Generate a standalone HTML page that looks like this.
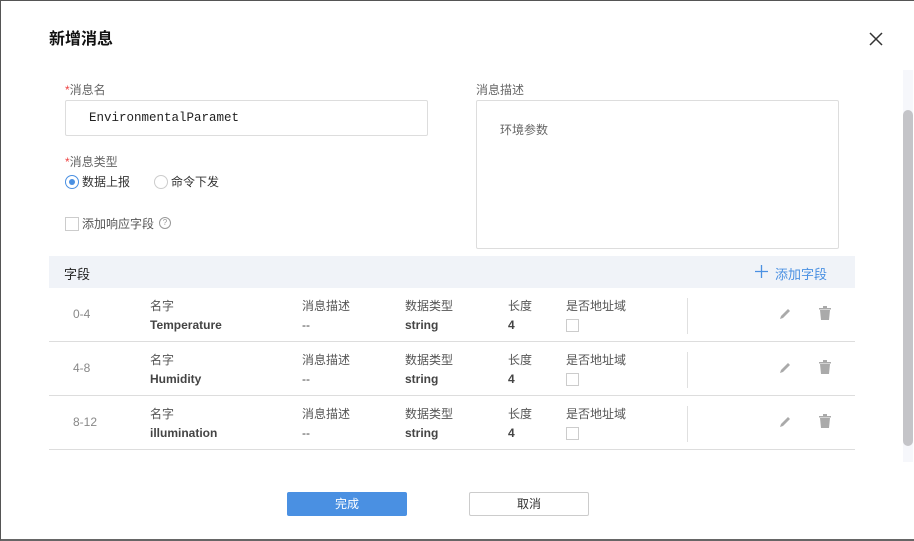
<!DOCTYPE html><html><head><meta charset="utf-8"><style>
*{margin:0;padding:0;box-sizing:border-box}
body{width:914px;height:541px;background:#fff;position:relative;overflow:hidden;font-family:"Liberation Sans","Noto Sans CJK SC",sans-serif;font-size:12px;color:#333}
.a{position:absolute;white-space:nowrap}
.lbl{color:#666;font-size:12px}
.red{color:#e44}
.row{position:absolute;left:49px;width:806px;height:54px;border-bottom:1px solid #ddd}
.row .a{line-height:14px}
.k{color:#555}
.v{font-weight:bold;color:#444}
.cb{position:absolute;width:13px;height:13px;border:1px solid #ccc;background:#fff}
.div{position:absolute;left:638px;top:10px;width:1px;height:36px;background:#e0e0e0}
</style></head><body>
<div class="a" style="left:0;top:0;width:914px;height:541px;border:1px solid #555;border-right:none;border-bottom:2px solid #666"></div>
<div class="a" style="left:49px;top:25px;font-size:16px;font-weight:bold;color:#111">新增消息</div>
<svg class="a" style="left:869px;top:32px" width="14" height="14" viewBox="0 0 14 14"><path d="M1 1L13 13M13 1L1 13" stroke="#333" stroke-width="1.5"/></svg>
<div class="a lbl" style="left:65px;top:81px"><span class="red">*</span>消息名</div>
<div class="a" style="left:65px;top:100px;width:363px;height:36px;border:1px solid #ddd;border-radius:2px"></div>
<div class="a" style="left:89px;top:111px;font-family:'Liberation Mono',monospace;font-size:12.5px;color:#222">EnvironmentalParamet</div>
<div class="a lbl" style="left:65px;top:153px"><span class="red">*</span>消息类型</div>
<div class="a" style="left:65px;top:175px;width:14px;height:14px;border:1px solid #4a90e2;border-radius:50%"></div>
<div class="a" style="left:69px;top:179px;width:6px;height:6px;background:#4a90e2;border-radius:50%"></div>
<div class="a" style="left:82px;top:173px;color:#333">数据上报</div>
<div class="a" style="left:154px;top:175px;width:14px;height:14px;border:1px solid #ccc;border-radius:50%"></div>
<div class="a" style="left:171px;top:173px;color:#333">命令下发</div>
<div class="cb" style="left:65px;top:217px;width:14px;height:14px"></div>
<div class="a" style="left:82px;top:215px;color:#555">添加响应字段</div>
<div class="a" style="left:159px;top:217px;width:12px;height:12px;border:1px solid #999;border-radius:50%;font-size:8px;line-height:10px;text-align:center;color:#999">?</div>
<div class="a lbl" style="left:476px;top:81px">消息描述</div>
<div class="a" style="left:476px;top:100px;width:363px;height:149px;border:1px solid #ddd;border-radius:2px"></div>
<div class="a" style="left:500px;top:121px;color:#666">环境参数</div>
<div class="a" style="left:49px;top:256px;width:806px;height:32px;background:#f0f3f8"></div>
<div class="a" style="left:64px;top:264px;font-size:13px;color:#222">字段</div>
<svg class="a" style="left:755px;top:265px" width="13" height="13" viewBox="0 0 13 13"><path d="M6.5 0V13M0 6.5H13" stroke="#4a90e2" stroke-width="1.3"/></svg>
<div class="a" style="left:775px;top:264px;font-size:13px;color:#4a90e2">添加字段</div>

<div class="row" style="top:288px">
<div class="a" style="left:24px;top:19px;color:#888">0-4</div>
<div class="a k" style="left:101px;top:11px">名字</div><div class="a v" style="left:101px;top:30px">Temperature</div>
<div class="a k" style="left:253px;top:11px">消息描述</div><div class="a v" style="left:253px;top:30px;font-weight:normal">--</div>
<div class="a k" style="left:356px;top:11px">数据类型</div><div class="a v" style="left:356px;top:30px">string</div>
<div class="a k" style="left:459px;top:11px">长度</div><div class="a v" style="left:459px;top:30px">4</div>
<div class="a k" style="left:517px;top:11px">是否地址域</div><div class="cb" style="left:517px;top:31px"></div>
<div class="div"></div>
<svg class="a" style="left:729px;top:19px" width="14" height="14" viewBox="0 0 14 14"><path d="M2 12L3 9L10 2L12 4L5 11Z" fill="#aaa"/></svg>
<svg class="a" style="left:770px;top:18px" width="12" height="14" viewBox="0 0 12 14"><path d="M0 2H12V3.5H0ZM4 0H8V2H4ZM1 4H11L10 14H2Z" fill="#aaa"/></svg>
</div>
<div class="row" style="top:342px">
<div class="a" style="left:24px;top:19px;color:#888">4-8</div>
<div class="a k" style="left:101px;top:11px">名字</div><div class="a v" style="left:101px;top:30px">Humidity</div>
<div class="a k" style="left:253px;top:11px">消息描述</div><div class="a v" style="left:253px;top:30px;font-weight:normal">--</div>
<div class="a k" style="left:356px;top:11px">数据类型</div><div class="a v" style="left:356px;top:30px">string</div>
<div class="a k" style="left:459px;top:11px">长度</div><div class="a v" style="left:459px;top:30px">4</div>
<div class="a k" style="left:517px;top:11px">是否地址域</div><div class="cb" style="left:517px;top:31px"></div>
<div class="div"></div>
<svg class="a" style="left:729px;top:19px" width="14" height="14" viewBox="0 0 14 14"><path d="M2 12L3 9L10 2L12 4L5 11Z" fill="#aaa"/></svg>
<svg class="a" style="left:770px;top:18px" width="12" height="14" viewBox="0 0 12 14"><path d="M0 2H12V3.5H0ZM4 0H8V2H4ZM1 4H11L10 14H2Z" fill="#aaa"/></svg>
</div>
<div class="row" style="top:396px">
<div class="a" style="left:24px;top:19px;color:#888">8-12</div>
<div class="a k" style="left:101px;top:11px">名字</div><div class="a v" style="left:101px;top:30px">illumination</div>
<div class="a k" style="left:253px;top:11px">消息描述</div><div class="a v" style="left:253px;top:30px;font-weight:normal">--</div>
<div class="a k" style="left:356px;top:11px">数据类型</div><div class="a v" style="left:356px;top:30px">string</div>
<div class="a k" style="left:459px;top:11px">长度</div><div class="a v" style="left:459px;top:30px">4</div>
<div class="a k" style="left:517px;top:11px">是否地址域</div><div class="cb" style="left:517px;top:31px"></div>
<div class="div"></div>
<svg class="a" style="left:729px;top:19px" width="14" height="14" viewBox="0 0 14 14"><path d="M2 12L3 9L10 2L12 4L5 11Z" fill="#aaa"/></svg>
<svg class="a" style="left:770px;top:18px" width="12" height="14" viewBox="0 0 12 14"><path d="M0 2H12V3.5H0ZM4 0H8V2H4ZM1 4H11L10 14H2Z" fill="#aaa"/></svg>
</div>

<div class="a" style="left:287px;top:492px;width:120px;height:24px;background:#4a90e2;border-radius:2px;color:#fff;text-align:center;line-height:24px">完成</div>
<div class="a" style="left:469px;top:492px;width:120px;height:24px;border:1px solid #ccc;border-radius:2px;color:#333;text-align:center;line-height:22px">取消</div>
<div class="a" style="left:903px;top:70px;width:10px;height:392px;background:#f6f7fb"></div>
<div class="a" style="left:903px;top:110px;width:10px;height:336px;background:#c4c4c8;border-radius:5px"></div>
</body></html>
